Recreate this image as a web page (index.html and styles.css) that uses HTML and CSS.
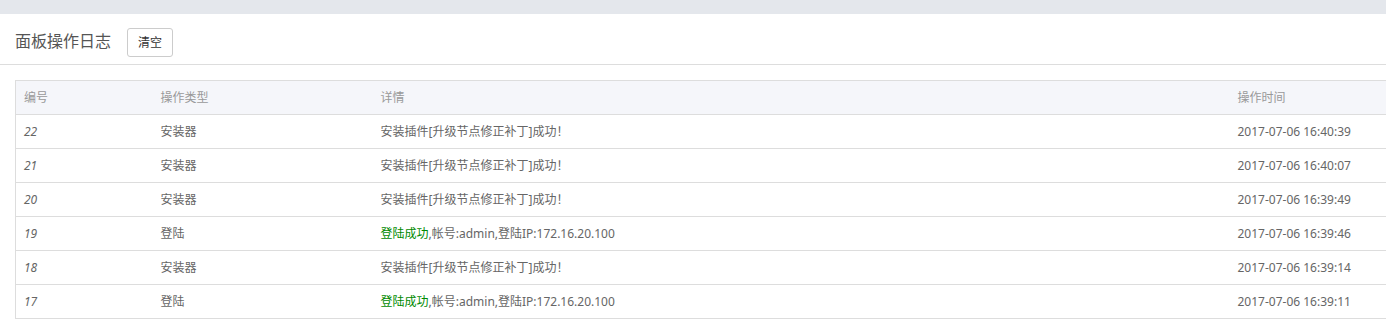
FILE: index.html
```html
<!DOCTYPE html>
<html lang="zh">
<head>
<meta charset="utf-8">
<title>面板操作日志</title>
<link rel="stylesheet" href="styles.css">
</head>
<body>
<div class="topbar"></div>
<div class="panel-head">
  <h3 class="title">面板操作日志</h3>
  <button class="btn">清空</button>
</div>
<div class="table-wrap">
  <table class="log-table">
    <colgroup>
      <col class="c1"><col class="c2"><col class="c3"><col class="c4">
    </colgroup>
    <thead>
      <tr><th>编号</th><th>操作类型</th><th>详情</th><th>操作时间</th></tr>
    </thead>
    <tbody>
      <tr><td class="num">22</td><td>安装器</td><td>安装插件[升级节点修正补丁]成功<span class="fw">！</span></td><td>2017-07-06 16:40:39</td></tr>
      <tr><td class="num">21</td><td>安装器</td><td>安装插件[升级节点修正补丁]成功<span class="fw">！</span></td><td>2017-07-06 16:40:07</td></tr>
      <tr><td class="num">20</td><td>安装器</td><td>安装插件[升级节点修正补丁]成功<span class="fw">！</span></td><td>2017-07-06 16:39:49</td></tr>
      <tr><td class="num">19</td><td>登陆</td><td><span class="ok">登陆成功</span>,帐号:admin,登陆IP:172.16.20.100</td><td>2017-07-06 16:39:46</td></tr>
      <tr><td class="num">18</td><td>安装器</td><td>安装插件[升级节点修正补丁]成功<span class="fw">！</span></td><td>2017-07-06 16:39:14</td></tr>
      <tr><td class="num">17</td><td>登陆</td><td><span class="ok">登陆成功</span>,帐号:admin,登陆IP:172.16.20.100</td><td>2017-07-06 16:39:11</td></tr>
    </tbody>
  </table>
</div>
</body>
</html>
```

FILE: styles.css
```css
html, body {
  margin: 0;
  padding: 0;
  background: #fff;
  overflow: hidden;
}
body {
  font-family: "Noto Sans", "Noto Sans CJK SC", sans-serif;
  font-size: 12px;
  color: #666;
}
.topbar {
  height: 14px;
  background: #e4e7ec;
}
.panel-head {
  box-sizing: border-box;
  height: 51px;
  padding: 14px 15px 0;
  border-bottom: 1px solid #ddd;
  display: flex;
  align-items: flex-start;
  gap: 16px;
}
.title {
  margin: 2px 0 0;
  font-size: 16px;
  line-height: 22px;
  font-weight: normal;
  color: #555;
}
.btn {
  height: 29px;
  width: 46px;
  padding: 0;
  border: 1px solid #ccc;
  border-radius: 3px;
  background: #fff;
  color: #333;
  font-family: inherit;
  font-size: 12px;
  line-height: 27px;
}
.table-wrap {
  padding: 15px 0 0 15px;
}
.log-table {
  width: 1390px;
  border-collapse: collapse;
  table-layout: fixed;
  border: 1px solid #ddd;
}
.c1 { width: 137px; }
.c2 { width: 220px; }
.c3 { width: 857px; }
.c4 { width: auto; }
.log-table th,
.log-table td {
  height: 33px;
  padding: 0 8px;
  text-align: left;
  font-weight: normal;
  white-space: nowrap;
  border-bottom: 1px solid #ddd;
  line-height: 18px;
}
.log-table th {
  background: #f5f6fa;
  color: #999;
}
.log-table td {
  color: #666;
}
.log-table td.num {
  font-style: italic;
}
.fw {
  font-family: "Noto Sans CJK JP", sans-serif;
}
.ok {
  color: #008a00;
}
```
